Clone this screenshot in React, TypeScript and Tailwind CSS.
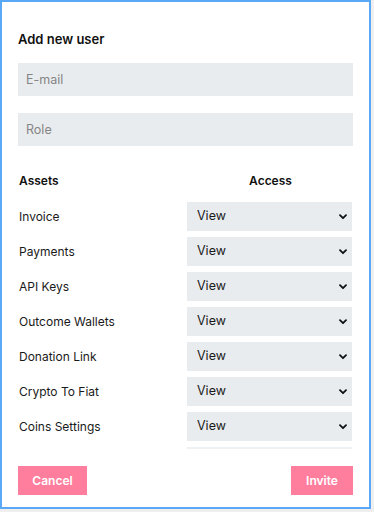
import React from "react";

const assets = [
  "Invoice",
  "Payments",
  "API Keys",
  "Outcome Wallets",
  "Donation Link",
  "Crypto To Fiat",
  "Coins Settings",
];

function Chevron() {
  return (
    <svg width="8" height="6" viewBox="0 0 8 6" className="pointer-events-none absolute right-[5px] top-1/2 -translate-y-1/2">
      <path d="M1 1.2 L4 4.2 L7 1.2" fill="none" stroke="#111" strokeWidth="1.8" strokeLinecap="round" strokeLinejoin="round" />
    </svg>
  );
}

export default function App() {
  return (
    <div className="w-[374px] h-[512px] bg-[#efefef]" style={{ fontFamily: "Inter, 'Noto Sans', sans-serif" }}>
      <div className="w-[371px] h-[509px] bg-white border-2 border-[#5aa8f8] flex flex-col px-4 pt-[29px]">
        <div className="text-[13px] leading-4 font-semibold text-[#111]">Add new user</div>
        <input
          className="mt-4 h-[33px] w-full bg-[#e9ecef] px-2 text-[12.5px] text-[#222] placeholder:text-[#858585] outline-none"
          placeholder="E-mail"
        />
        <input
          className="mt-[17px] h-[33px] w-full bg-[#e9ecef] px-2 text-[12.5px] text-[#222] placeholder:text-[#858585] outline-none"
          placeholder="Role"
        />
        <div className="mt-[27px] flex h-4 items-center text-[12px] font-semibold text-[#111]">
          <div className="flex-1 pl-[1px]">Assets</div>
          <div className="w-[165px] text-center">Access</div>
        </div>
        <div className="mt-[13px] h-[247px] overflow-hidden">
          <div className="flex flex-col gap-[6px]">
            {assets.map((a) => (
              <div key={a} className="flex items-center">
                <div className="flex-1 pl-[1px] text-[12px] text-[#1a1a1a]">{a}</div>
                <div className="relative w-[165px] mr-[1px]">
                  <select
                    defaultValue="view"
                    className="h-[29px] w-full appearance-none bg-[#e9ecef] pl-[10px] text-[12.5px] text-[#1a1a1a] outline-none"
                  >
                    <option value="view">View</option>
                    <option value="edit">Edit</option>
                    <option value="none">None</option>
                  </select>
                  <Chevron />
                </div>
              </div>
            ))}
            <div className="flex">
              <div className="flex-1" />
              <div className="h-[29px] w-[165px] mr-[1px] bg-[#eef0f2]" />
            </div>
          </div>
        </div>
        <div className="mt-[17px] flex justify-between">
          <button className="h-[29px] w-[69px] bg-[#ff7d9d] text-[12px] font-semibold text-white">Cancel</button>
          <button className="h-[29px] w-[62px] bg-[#ff7d9d] text-[12px] font-semibold text-white">Invite</button>
        </div>
      </div>
    </div>
  );
}
